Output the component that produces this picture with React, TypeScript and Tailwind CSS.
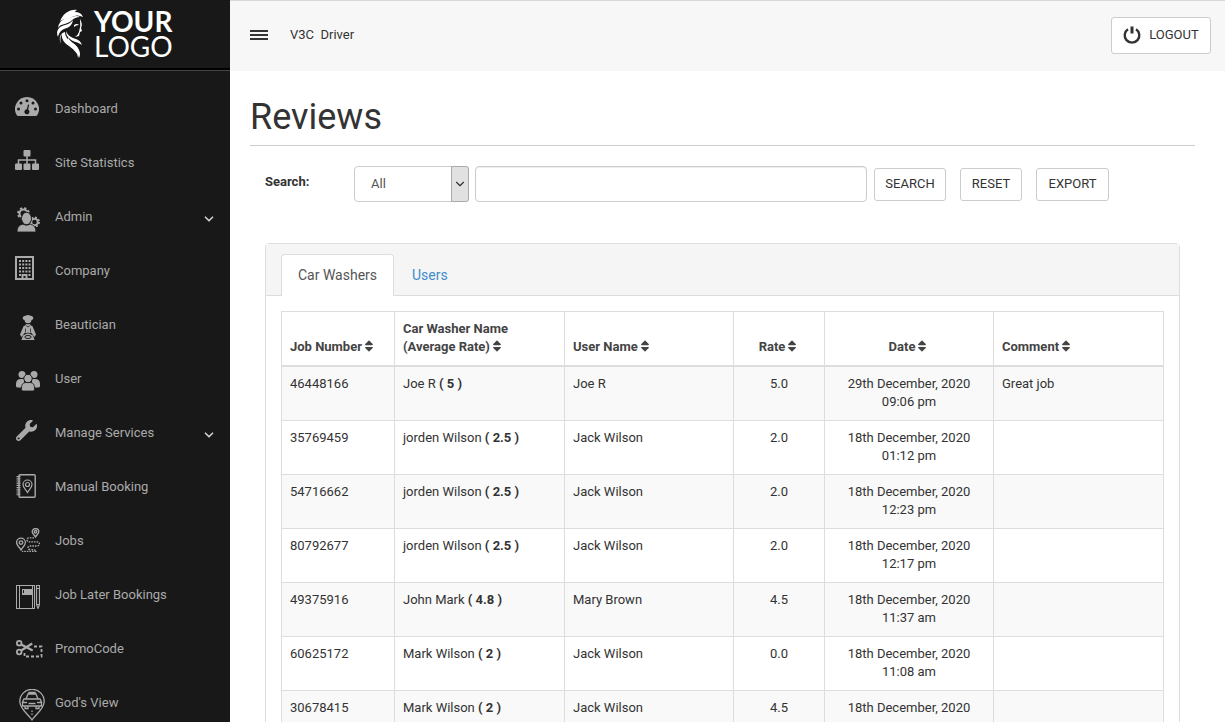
import type { ReactNode } from "react";
import { FaSort, FaWrench } from "react-icons/fa";
import { ChevronDown } from "lucide-react";

const Gauge = () => (
  <svg x="3" y="10" width="24" height="19" viewBox="0 0 24 19" fill="currentColor" fillRule="evenodd">
    <path d="M12 0a12 12 0 0 0-10.200 18.300q.4.700 1.200.7h18q.8 0 1.200-.7A12 12 0 0 0 12 0ZM12 2.200a1.500 1.500 0 1 1 0 3a1.500 1.500 0 0 1 0-3ZM6 4.500a1.500 1.500 0 1 1 0 3a1.500 1.500 0 0 1 0-3ZM18 4.500a1.500 1.500 0 1 1 0 3a1.500 1.500 0 0 1 0-3ZM3.500 10.500a1.500 1.500 0 1 1 0 3a1.500 1.500 0 0 1 0-3ZM20.500 10.500a1.500 1.500 0 1 1 0 3a1.500 1.500 0 0 1 0-3ZM13 7.500l1.200.3-1.100 4.800a2.500 2.500 0 1 1-1.300-.3Z" />
  </svg>
);

const Sitemap = () => (
  <svg x="3" y="9" width="24" height="20" viewBox="0 0 24 20" fill="currentColor">
    <rect x="8.500" y="0" width="7" height="6.500" rx="1" />
    <rect x="0" y="13.500" width="7" height="6.500" rx="1" />
    <rect x="8.500" y="13.500" width="7" height="6.500" rx="1" />
    <rect x="17" y="13.500" width="7" height="6.500" rx="1" />
    <path d="M12 6v8M3.500 14v-4h17v4" fill="none" stroke="currentColor" strokeWidth="1.500" />
  </svg>
);

const AdminIcon = () => (
  <svg x="5" y="12" width="23" height="25" viewBox="0 0 23 25" fill="currentColor">
    <circle cx="6.500" cy="6.500" r="4" fill="none" stroke="currentColor" strokeWidth="2" />
    <circle cx="6.500" cy="6.500" r="5.500" fill="none" stroke="currentColor" strokeWidth="1.800" strokeDasharray="2.300 2.020" />
    <circle cx="17.500" cy="15" r="3.300" fill="none" stroke="currentColor" strokeWidth="2" />
    <circle cx="17.500" cy="15" r="4.600" fill="none" stroke="currentColor" strokeWidth="1.800" strokeDasharray="1.900 1.710" />
    <path d="M0 25c0-4.500 2-7 5.500-7.800q4 2 8 0c3.500.8 5.500 3.300 5.500 7.800Z" stroke="#181818" strokeWidth=".8" />
    <ellipse cx="9.500" cy="11.500" rx="5" ry="6.200" stroke="#181818" />
  </svg>
);

const Building = () => (
  <svg x="3" y="7" width="19" height="24" viewBox="0 0 19 24" fill="none" stroke="currentColor">
    <rect x="1" y="1" width="17" height="22" strokeWidth="2" />
    <path d="M4 5h11.500M4 8.500h11.500M4 12h11.500M4 15.500h11.500" strokeWidth="2" strokeDasharray="2 1.200" />
    <path d="M4 19h2M13.500 19h2M7.500 23v-4h4v4" strokeWidth="2" />
  </svg>
);

const Beautician = () => (
  <svg x="8" y="12" width="16" height="25" viewBox="0 0 16 25" fill="currentColor">
    <path d="M4.500 5C1.500 4 2.500.8 5.500.8Q8-.8 10.500.8c3 0 4 3.200 1 4.200L11 7q-3 2.600-6 0Z" />
    <path d="M6 8.800q2 1 4 0l.5 1.400 2 1L16 19.500 14.500 22 11 17.500H5L1.500 22 0 19.500l3.500-8.300 2-1Z" />
    <path d="M5 14h6v4H5Z" />
    <path d="M3 20.500q5-5 10 0l1.500 4.500h-13Z" />
    <path d="m6 10.500 2 1.500 2-1.500M5.500 13.500v4M10.500 13.500v4M3.800 19.500q4.200-3 8.400 0" fill="none" stroke="#181818" strokeWidth=".7" />
    <ellipse cx="8" cy="22" rx="3.200" ry="1.500" fill="none" stroke="#181818" />
  </svg>
);

const Users = () => (
  <svg x="4" y="14" width="24" height="20" viewBox="0 0 24 20" fill="currentColor">
    <circle cx="6" cy="3.500" r="3.500" />
    <circle cx="18" cy="3.500" r="3.500" />
    <path d="M0 15v-2q0-5 5-5h3v7l-3 1.500H2q-2 0-2-1.500ZM24 15v-2q0-5-5-5h-3v7l3 1.500h3q2 0 2-1.500Z" />
    <path d="M5.500 18.500V17q0-5.500 4.500-5.500h4q4.500 0 4.500 5.500v1.500q0 1.500-1.500 1.500H7q-1.500 0-1.500-1.500Z" stroke="#181818" strokeWidth=".8" />
    <circle cx="12" cy="7.500" r="4.200" stroke="#181818" />
  </svg>
);

const Booking = () => (
  <svg x="4" y="9" width="20" height="24" viewBox="0 0 20 24" fill="none" stroke="currentColor">
    <rect x="3" y=".8" width="16.200" height="22.400" rx="1" strokeWidth="1.400" />
    <path d="M2.500 2v20" strokeWidth="4" strokeDasharray="1.200 1" />
    <path d="M11.500 18.500c-2-3.500-4.500-5-4.500-8a4.500 4.500 0 0 1 9 0c0 3-2.500 4.500-4.500 8Z" strokeWidth="1.200" />
    <circle cx="11.500" cy="10.500" r="2" strokeWidth="1.200" />
  </svg>
);

const Route = () => (
  <svg x="4" y="9" width="24" height="24" viewBox="0 0 24 24" fill="none" stroke="currentColor" strokeWidth="1.300">
    <path d="M5 22C3.500 19 .6 17.500.6 14.600a4.400 4.400 0 0 1 8.800 0C9.400 17.500 6.500 19 5 22Z" />
    <circle cx="5" cy="14.600" r="1.800" />
    <path d="M19.500 9c-1.200-2.200-3.300-3.200-3.300-5.200a3.300 3.300 0 0 1 6.600 0c0 2-2.100 3-3.300 5.200Z" />
    <circle cx="19.500" cy="3.800" r="1.300" />
    <path d="M18 9.800h-5q-2 0-2 2t2 2h8q2.300 0 2.300 2T21 18h-7q-2 0-2 1.800T14 21.500q6 0 6 1.800H6" strokeDasharray="1.600 1" />
  </svg>
);

const Notebook = () => (
  <svg x="4" y="12" width="24" height="24" viewBox="0 0 24 24" fill="none" stroke="currentColor">
    <rect x=".5" y=".5" width="18" height="23" />
    <path d="M3.500 1v22M16.500 1v22" />
    <rect x="6" y="4" width="10" height="6" fill="currentColor" stroke="none" />
    <path d="M7.500 5v3" stroke="#181818" />
    <path d="M20.500.5h3v19l-1.500 4-1.500-4ZM20.500 3.500h3M20.500 19.500h3" strokeWidth="1.200" />
  </svg>
);

const Coupon = () => (
  <svg x="4" y="13" width="27" height="18" viewBox="0 0 27 18" fill="none" stroke="currentColor" strokeWidth="1.800">
    <circle cx="3.200" cy="3.200" r="2.300" />
    <circle cx="3.200" cy="12" r="2.300" />
    <path d="m5.200 4.600 11.500 6M5.200 10.500l11-7" strokeWidth="2.200" />
    <path d="M18 6.500h7.500v10H8.500V13" strokeDasharray="3 2" />
  </svg>
);

const TaxiPin = () => (
  <svg x="7" y="8" width="26" height="32" viewBox="0 0 26 32" fill="none" stroke="currentColor" strokeWidth="1.300">
    <path d="M13 31C9 25 .8 20 .8 12.500a12.200 12.200 0 0 1 24.400 0C25.200 20 17 25 13 31Z" />
    <path d="M10 5V3.500h6V5M7 10l2-5h8l2 5M5 10h16l1.500 3v4h-19v-4ZM6 17v2.500h3V17M17 17v2.500h3V17M9.500 14.500h7M4 13.500h4M18 13.500h4" />
    <path d="M13 21.500v6" strokeDasharray="1.500 1.500" />
  </svg>
);

type NavItem = { label: string; icon: ReactNode; children?: boolean };

const navItems: NavItem[] = [
  { label: "Dashboard", icon: <Gauge /> },
  { label: "Site Statistics", icon: <Sitemap /> },
  { label: "Admin", icon: <AdminIcon />, children: true },
  { label: "Company", icon: <Building /> },
  { label: "Beautician", icon: <Beautician /> },
  { label: "User", icon: <Users /> },
  { label: "Manage Services", icon: <FaWrench x="4" y="9" size={21} />, children: true },
  { label: "Manual Booking", icon: <Booking /> },
  { label: "Jobs", icon: <Route /> },
  { label: "Job Later Bookings", icon: <Notebook /> },
  { label: "PromoCode", icon: <Coupon /> },
  { label: "God's View", icon: <TaxiPin /> },
];

const columns = [
  { label: "Job Number", col: "w-[113px]", align: "text-left" },
  { label: "Car Washer Name (Average Rate)", col: "w-[170px]", align: "text-left" },
  { label: "User Name", col: "w-[169px]", align: "text-left" },
  { label: "Rate", col: "w-[91px]", align: "text-center" },
  { label: "Date", col: "w-[169px]", align: "text-center" },
  { label: "Comment", col: "w-[170px]", align: "text-left" },
];

const reviews = [
  { job: "46448166", washer: "Joe R", avg: "5", user: "Joe R", rate: "5.0", date: "29th December, 2020", time: "09:06 pm", comment: "Great job" },
  { job: "35769459", washer: "jorden Wilson", avg: "2.5", user: "Jack Wilson", rate: "2.0", date: "18th December, 2020", time: "01:12 pm", comment: "" },
  { job: "54716662", washer: "jorden Wilson", avg: "2.5", user: "Jack Wilson", rate: "2.0", date: "18th December, 2020", time: "12:23 pm", comment: "" },
  { job: "80792677", washer: "jorden Wilson", avg: "2.5", user: "Jack Wilson", rate: "2.0", date: "18th December, 2020", time: "12:17 pm", comment: "" },
  { job: "49375916", washer: "John Mark", avg: "4.8", user: "Mary Brown", rate: "4.5", date: "18th December, 2020", time: "11:37 am", comment: "" },
  { job: "60625172", washer: "Mark Wilson", avg: "2", user: "Jack Wilson", rate: "0.0", date: "18th December, 2020", time: "11:08 am", comment: "" },
  { job: "30678415", washer: "Mark Wilson", avg: "2", user: "Jack Wilson", rate: "4.5", date: "18th December, 2020", time: "", comment: "" },
];

function Logo() {
  return (
    <a href="#" className="flex h-[68px] items-center gap-[10px] pl-[56px] text-white">
      <svg width="28" height="50" viewBox="0 0 28 50" fill="currentColor" aria-hidden="true">
        <path d="M4 13C6 5 14 0 21 1q-2 1-2 2 6 0 8 5-6-3-11 0C11 11 6 9 4 13Z" />
        <path d="M2 19C3 10 11 9 16 8q5-2 8 0-5 0-9 4C10 16 5 14 2 19Z" />
        <path d="M2 28C-1 21 4 17 9 16q5-1 8-5-1 6-6 8C6 20 3 23 2 28Z" />
        <path d="M5 35C2 28 5 24 9 23c0 6 5 9 9 12 5 4 6 8 4 14 0-5-4-8-9-12-5-3-8-8-7-12-2 3-2 6-1 10Z" />
        <path d="M10 22c2 5 6 7 10 8 3 1 5 3 6 6-4-3-9-3-12-6-3-2-4-5-4-8Z" />
        <path d="M12 28c1 5 9 7 11 13q2 4 0 8C22 40 11 38 12 28Z" />
        <path d="M24 10q3 5 1 9l1 3-2 1-1 4-4 1q3-2 4-5 2-6 1-13ZM18 16q3-2 5 0-3 0-5 2Z" />
      </svg>
      <span className="flex flex-col font-['Lato',sans-serif] text-[28px] leading-[25px]">
        <span className="font-bold">YOUR</span>
        <span>LOGO</span>
      </span>
    </a>
  );
}

function Sidebar() {
  return (
    <aside className="w-[230px] shrink-0 overflow-hidden bg-[#181818] text-[#aaaaaa]">
      <div className="border-b border-[#444444]">
        <div className="border-b-2 border-black">
          <Logo />
        </div>
      </div>
      <nav className="pt-[11px]">
        <ul>
          {navItems.map((item) => (
            <li key={item.label}>
              <a href="#" className="flex h-[54px] items-center gap-[7px] pr-[14px] pl-3 text-[13px]">
                <svg width="36" height="44" viewBox="0 0 36 44" className="shrink-0" aria-hidden="true">
                  {item.icon}
                </svg>
                <span className="flex-1">{item.label}</span>
                {item.children && <ChevronDown size={14} strokeWidth={3} className="mt-1 text-[#cccccc]" />}
              </a>
            </li>
          ))}
        </ul>
      </nav>
    </aside>
  );
}

function TopBar() {
  return (
    <header className="flex h-[71px] items-center border-t border-[#d8d8d8] bg-[#f7f7f7] pr-[14px] pb-[2px] pl-5">
      <button type="button" aria-label="Toggle menu" className="flex w-[18px] flex-col gap-[2px]">
        <span className="h-[2px] bg-[#333333]" />
        <span className="h-[2px] bg-[#333333]" />
        <span className="h-[2px] bg-[#333333]" />
      </button>
      <span className="ml-[22px] flex-1 whitespace-pre text-[13px]">V3C  Driver</span>
      <button type="button" className="flex h-[37px] w-[100px] items-center justify-center gap-2 rounded-[3px] border border-[#cccccc] bg-white text-[13px]">
        <svg width="18" height="18" viewBox="0 0 18 18" fill="none" stroke="currentColor" strokeWidth="2.400" aria-hidden="true">
          <path d="M5 3.200a7.300 7.300 0 1 0 8 0" />
          <path d="M9 .5v7" strokeWidth="3" />
        </svg>
        LOGOUT
      </button>
    </header>
  );
}

const actionClass = "h-[33px] shrink-0 rounded-[3px] border border-[#cccccc] bg-white text-[13px]";

function SearchForm() {
  return (
    <form className="flex items-center pt-5 pr-[86px] pl-[15px]" onSubmit={(e) => e.preventDefault()}>
      <label htmlFor="keyword" className="w-[89px] shrink-0 pb-1 text-[13px] font-bold">
        Search:
      </label>
      <div className="relative w-[115px] shrink-0">
        <select aria-label="Search field" className="h-9 w-full appearance-none rounded-[4px] border border-[#cccccc] bg-white pl-4 text-[13px] text-[#555555]">
          <option>All</option>
        </select>
        <span className="pointer-events-none absolute inset-y-0 right-0 flex w-[18px] items-center justify-center rounded-r-[3px] border border-[#aaaaaa] bg-[#e1e1e1]">
          <ChevronDown size={14} className="shrink-0" />
        </span>
      </div>
      <input id="keyword" type="text" className="ml-[6px] h-9 min-w-0 flex-1 rounded-[4px] border border-[#cccccc] bg-white px-3 text-[13px] shadow-[inset_0_1px_1px_rgba(0,0,0,0.075)]" />
      <div className="ml-[7px] flex gap-[14px]">
        <button type="submit" className={`${actionClass} w-[72px]`}>SEARCH</button>
        <button type="reset" className={`${actionClass} w-[62px]`}>RESET</button>
        <button type="button" className={`${actionClass} w-[73px]`}>EXPORT</button>
      </div>
    </form>
  );
}

function ReviewsTable() {
  return (
    <table className="w-full table-fixed border-collapse text-[13px] leading-[18px]">
      <colgroup>
        {columns.map((c) => (
          <col key={c.label} className={c.col} />
        ))}
      </colgroup>
      <thead>
        <tr>
          {columns.map((c) => (
            <th key={c.label} className={`border border-b-2 border-[#dddddd] px-2 pt-2 pb-[9px] align-bottom font-bold text-[#444444] ${c.align}`}>
              <a href="#">
                {c.label}
                <FaSort size={14} className="inline-block align-[-2px]" />
              </a>
            </th>
          ))}
        </tr>
      </thead>
      <tbody>
        {reviews.map((r) => (
          <tr key={r.job} className="h-[54px] odd:bg-[#f9f9f9] [&>td]:border [&>td]:border-[#dddddd] [&>td]:px-2 [&>td]:pt-2 [&>td]:pb-[9px] [&>td]:align-top">
            <td>{r.job}</td>
            <td>
              {r.washer} <b>( {r.avg} )</b>
            </td>
            <td>{r.user}</td>
            <td className="text-center">{r.rate}</td>
            <td className="text-center">
              {r.date}
              <br />
              {r.time}
            </td>
            <td>{r.comment}</td>
          </tr>
        ))}
      </tbody>
    </table>
  );
}

export default function App() {
  return (
    <div className="flex h-screen overflow-hidden bg-white font-['Roboto',sans-serif] text-[#333333]">
      <Sidebar />
      <div className="min-w-0 flex-1 overflow-hidden">
        <TopBar />
        <main className="px-5 pr-[30px]">
          <h1 className="border-b border-[#cccccc] pt-[25px] pb-[7px] text-[36px] leading-[42px]">Reviews</h1>
          <SearchForm />
          <section className="mx-[15px] mt-[41px] rounded-t-[4px] border border-[#dddddd]">
            <div className="border-b border-[#dddddd] bg-[#f5f5f5] px-[15px] pt-[10px]">
              <div role="tablist" className="-mb-px flex">
                <button type="button" role="tab" aria-selected="true" className="h-[42px] w-[113px] rounded-t-[4px] border border-b-0 border-[#dddddd] bg-white text-[14px] text-[#555555]">
                  Car Washers
                </button>
                <button type="button" role="tab" aria-selected="false" className="h-[42px] px-[18px] text-[14px] text-[#428bca]">
                  Users
                </button>
              </div>
            </div>
            <div className="p-[15px]">
              <ReviewsTable />
            </div>
          </section>
        </main>
      </div>
    </div>
  );
}
